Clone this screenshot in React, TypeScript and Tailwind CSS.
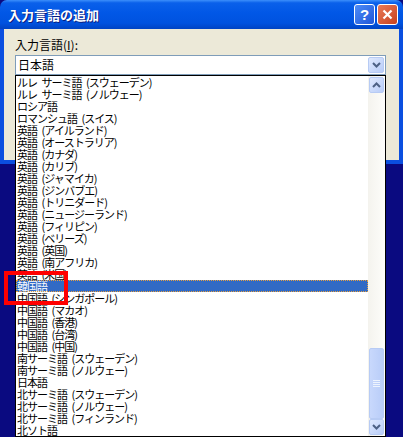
import React from 'react';

const items = [
  'ルレ サーミ語 (スウェーデン)',
  'ルレ サーミ語 (ノルウェー)',
  'ロシア語',
  'ロマンシュ語 (スイス)',
  '英語 (アイルランド)',
  '英語 (オーストラリア)',
  '英語 (カナダ)',
  '英語 (カリブ)',
  '英語 (ジャマイカ)',
  '英語 (ジンバブエ)',
  '英語 (トリニダード)',
  '英語 (ニュージーランド)',
  '英語 (フィリピン)',
  '英語 (ベリーズ)',
  '英語 (英国)',
  '英語 (南アフリカ)',
  '英語 (米国)',
  '韓国語',
  '中国語 (シンガポール)',
  '中国語 (マカオ)',
  '中国語 (香港)',
  '中国語 (台湾)',
  '中国語 (中国)',
  '南サーミ語 (スウェーデン)',
  '南サーミ語 (ノルウェー)',
  '日本語',
  '北サーミ語 (スウェーデン)',
  '北サーミ語 (ノルウェー)',
  '北サーミ語 (フィンランド)',
  '北ソト語',
];

const font = "font-['MS_UI_Gothic','Noto_Sans_CJK_JP',sans-serif]";

const Chevron = ({ up = false }: { up?: boolean }) => (
  <svg width="9" height="6" viewBox="0 0 9 6" className={up ? 'rotate-180' : ''}>
    <path d="M1 1 L4.5 4.5 L8 1" fill="none" stroke="#4d6185" strokeWidth="2" />
  </svg>
);

const ScrollBtn = ({ up = false }: { up?: boolean }) => (
  <div className="h-[16px] w-[15px] mx-auto rounded-[2px] border border-[#b7cbf4] bg-gradient-to-br from-[#dfe9fe] to-[#b9cdf8] flex items-center justify-center">
    <Chevron up={up} />
  </div>
);

const App = () => {
  return (
    <div className={`relative w-[403px] h-[437px] overflow-hidden bg-[#0a0a80] ${font}`}>
      {/* ダイアログ */}
      <div className="w-[403px]">
        <div className="h-[29px] flex items-center justify-between pl-[8px] pr-[5px] rounded-t-[7px] bg-[linear-gradient(to_bottom,#3c8ffb_0%,#0a60ea_10%,#0157e6_45%,#0052df_80%,#0043c3_100%)]">
          <span className="text-white text-[13px] font-bold leading-none [text-shadow:1px_1px_0_#0a1e80]">入力言語の追加</span>
          <div className="flex gap-[2px]">
            <div className="w-[21px] h-[21px] rounded-[3px] border border-white bg-gradient-to-br from-[#4f8cf7] to-[#1f55d8] flex items-center justify-center text-white text-[15px] font-bold font-['Liberation_Sans',sans-serif] leading-none">?</div>
            <div className="w-[21px] h-[21px] rounded-[3px] border border-white bg-gradient-to-br from-[#e97a57] to-[#c7401c] flex items-center justify-center">
              <svg width="11" height="11" viewBox="0 0 11 11">
                <path d="M1.5 1.5 L9.5 9.5 M9.5 1.5 L1.5 9.5" stroke="white" strokeWidth="2.2" />
              </svg>
            </div>
          </div>
        </div>
        <div className="h-[135px] bg-[#ece9d8] border-x-[4px] border-b-[4px] border-[#0b4fe0] pl-[11px] pr-[13px]">
          <div className="pt-[9px] text-[12px] leading-[14px] text-black">
            入力言語(<span className="underline">I</span>):
          </div>
          <div className="mt-[3px] h-[20px] border border-[#7f9db9] bg-white flex items-center justify-between pl-[2px] pr-[1px]">
            <span className="text-[12px] leading-none text-black">日本語</span>
            <div className="w-[16px] h-[16px] rounded-[2px] border border-[#b7cbf4] bg-gradient-to-br from-[#dfe9fe] to-[#b9cdf8] flex items-center justify-center">
              <Chevron />
            </div>
          </div>
        </div>
      </div>

      {/* ドロップダウンリスト */}
      <div className="absolute top-[75px] left-[15px] w-[371px] h-[362px] border border-black bg-white flex">
        <div className="flex-1 overflow-hidden">
          {items.map((t, i) => (
            <div
              key={i}
              className={`h-[12px] pl-[1px] text-[11px] leading-[12px] tracking-[-1px] [word-spacing:3px] whitespace-nowrap ${
                t === '韓国語'
                  ? 'bg-[#316ac5] text-white outline-1 outline-dotted outline-[#e8a040] -outline-offset-1'
                  : 'text-black'
              }`}
            >
              {t}
            </div>
          ))}
        </div>
        <div className="w-[17px] bg-gradient-to-r from-[#f4f3ee] to-[#fdfdfa] flex flex-col pt-[1px]">
          <ScrollBtn up />
          <div className="flex-1" />
          <div className="h-[71px] w-[15px] mx-auto rounded-[2px] border border-[#b7cbf4] bg-gradient-to-r from-[#c8d8fc] to-[#b9cdf8] flex flex-col items-center justify-center gap-[1px]">
            <div className="w-[7px] h-[1px] bg-[#eef4fe]" />
            <div className="w-[7px] h-[1px] bg-[#eef4fe]" />
            <div className="w-[7px] h-[1px] bg-[#eef4fe]" />
            <div className="w-[7px] h-[1px] bg-[#eef4fe]" />
          </div>
          <ScrollBtn />
          <div className="h-[1px]" />
        </div>
      </div>

      {/* 赤枠 */}
      <div className="absolute left-[4px] top-[271px] w-[64px] h-[34px] border-[4px] border-[#ff0000]" />
    </div>
  );
};

export default App;
